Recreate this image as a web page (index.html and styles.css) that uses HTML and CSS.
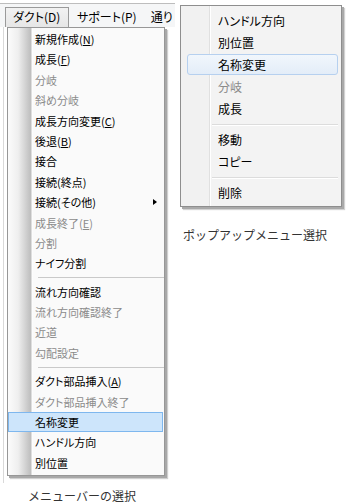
FILE: index.html
```html
<!DOCTYPE html>
<html lang="ja">
<head>
<meta charset="utf-8">
<link rel="stylesheet" href="styles.css">
</head>
<body>
<div class="page">
  <div class="fig-left">
    <div class="win">
      <div class="menubar">
        <span class="mb-item open">ダクト(D)</span>
        <span class="mb-item">サポート(P)</span>
        <span class="mb-item">通り</span>
      </div>
      <div class="win-body">
        <div class="dropdown">
          <div class="mi"><span>新規作成(<u>N</u>)</span></div>
          <div class="mi"><span>成長(<u>F</u>)</span></div>
          <div class="mi dis"><span>分岐</span></div>
          <div class="mi dis"><span>斜め分岐</span></div>
          <div class="mi"><span>成長方向変更(<u>C</u>)</span></div>
          <div class="mi"><span>後退(<u>B</u>)</span></div>
          <div class="mi"><span>接合</span></div>
          <div class="mi"><span>接続(終点)</span></div>
          <div class="mi sub"><span>接続(その他)</span><span class="arrow"></span></div>
          <div class="mi dis"><span>成長終了(<u>E</u>)</span></div>
          <div class="mi dis"><span>分割</span></div>
          <div class="mi"><span>ナイフ分割</span></div>
          <div class="sep"></div>
          <div class="mi"><span>流れ方向確認</span></div>
          <div class="mi dis"><span>流れ方向確認終了</span></div>
          <div class="mi dis"><span>近道</span></div>
          <div class="mi dis"><span>勾配設定</span></div>
          <div class="sep"></div>
          <div class="mi"><span>ダクト部品挿入(<u>A</u>)</span></div>
          <div class="mi dis"><span>ダクト部品挿入終了</span></div>
          <div class="mi hl"><span>名称変更</span></div>
          <div class="mi"><span>ハンドル方向</span></div>
          <div class="mi"><span>別位置</span></div>
        </div>
      </div>
    </div>
    <div class="caption cap-left">メニューバーの選択</div>
  </div>
  <div class="fig-right">
    <div class="popup">
      <div class="pi">ハンドル方向</div>
      <div class="pi">別位置</div>
      <div class="pi hl">名称変更</div>
      <div class="pi dis">分岐</div>
      <div class="pi">成長</div>
      <div class="psep"></div>
      <div class="pi">移動</div>
      <div class="pi">コピー</div>
      <div class="psep"></div>
      <div class="pi">削除</div>
    </div>
    <div class="caption cap-right">ポップアップメニュー選択</div>
  </div>
</div>
</body>
</html>
```

FILE: styles.css
```css
* { box-sizing: border-box; }
html, body {
  margin: 0;
  padding: 0;
  background: #fff;
}
body {
  width: 350px;
  height: 504px;
  overflow: hidden;
  font-family: "Noto Sans CJK JP", "Noto Sans", sans-serif;
  font-feature-settings: "palt";
  color: #000;
}
.page {
  display: flex;
  align-items: flex-start;
}

/* ---------- left figure ---------- */
.fig-left {
  width: 175px;
  display: flex;
  flex-direction: column;
}
.win {
  width: 175px;
  height: 480px;
  margin-top: 3px;
  border-top: 1px solid #bdbdbd;
  overflow: hidden;
  display: flex;
  flex-direction: column;
}
.menubar {
  height: 23px;
  background: #f5f6f7;
  display: flex;
  align-items: flex-end;
  padding-left: 5px;
  font-size: 12px;
  white-space: nowrap;
}
.mb-item {
  flex: none;
  height: 20px;
  line-height: 18px;
  padding: 0 6px 0 6px;
  border: 1px solid transparent;
  border-bottom: none;
}
.mb-item.open {
  width: 64px;
  padding-left: 7px;
  margin-right: 1px;
  border-color: #9a9a9a;
  background: linear-gradient(#f2f2f2, #e6e6e6);
}
.win-body {
  flex: 1;
  display: flex;
  padding-left: 7px;
  background: linear-gradient(to right, #fff 3px, #d9d9d9 3px, #d9d9d9 4px, #fff 4px);
}
.dropdown {
  width: 158px;
  height: 449px;
  border: 1px solid #979797;
  box-shadow: 2px 2px 0 #a8a8a8, 3px 3px 1px #d0d0d0;
  padding: 1px 0 2px 0;
  font-size: 11px;
  background: linear-gradient(to right, #fbfbfb 0px, #efefef 10px, #bdbdbd 23px, #ffffff 24px, #fafafa 25px, #fafafa 100%);
}
.mi {
  height: 20.4px;
  line-height: 18.4px;
  padding-left: 26px;
  padding-right: 5px;
  border: 1px solid transparent;
  margin-right: 1px;
  display: flex;
  align-items: center;
  justify-content: space-between;
  white-space: nowrap;
}
.mi u { text-underline-offset: 1px; }
.dis { color: #8b8b8b; }
.mi.hl {
  background: #cde5fb;
  border-color: #7eb7ee;
}
.arrow {
  width: 0;
  height: 0;
  border-top: 3.5px solid transparent;
  border-bottom: 3.5px solid transparent;
  border-left: 4px solid #000;
}
.sep {
  height: 8px;
  margin-left: 30px;
  display: flex;
  align-items: center;
}
.sep::before {
  content: "";
  flex: 1;
  height: 1px;
  background: #c9c9c9;
}

/* ---------- captions ---------- */
.caption {
  font-size: 12px;
  color: #333;
  line-height: 16px;
  font-feature-settings: normal;
  white-space: nowrap;
}
.cap-left {
  margin-top: 5px;
  padding-left: 28px;
}

/* ---------- right figure ---------- */
.fig-right {
  display: flex;
  flex-direction: column;
  margin-left: 5px;
  margin-top: 5px;
}
.popup {
  width: 162px;
  height: 202px;
  border: 1px solid #8e8e8e;
  box-shadow: 2px 2px 0 #a9a9a9, 3px 3px 1px #d2d2d2;
  padding: 4px 3px 2px 6px;
  font-size: 12px;
  background: linear-gradient(to right, #f1f1f1 28px, #e0e0e0 28px, #e0e0e0 29px, #ffffff 29px, #ffffff 30px, #f3f3f3 30px);
}
.pi {
  height: 22px;
  line-height: 20px;
  padding-left: 30px;
  border: 1px solid transparent;
  border-radius: 3px;
  white-space: nowrap;
}
.pi.hl {
  height: 21px;
  margin-bottom: 1px;
  background: linear-gradient(#f1f6fc, #e3edf8);
  border-color: #b6d0ef;
}
.psep {
  height: 9px;
  margin-left: 25px;
  display: flex;
  flex-direction: column;
  justify-content: center;
}
.psep::before {
  content: "";
  height: 1px;
  background: #dcdcdc;
}
.psep::after {
  content: "";
  height: 1px;
  background: #ffffff;
}
.cap-right {
  margin-top: 20px;
  padding-left: 3px;
}
```
